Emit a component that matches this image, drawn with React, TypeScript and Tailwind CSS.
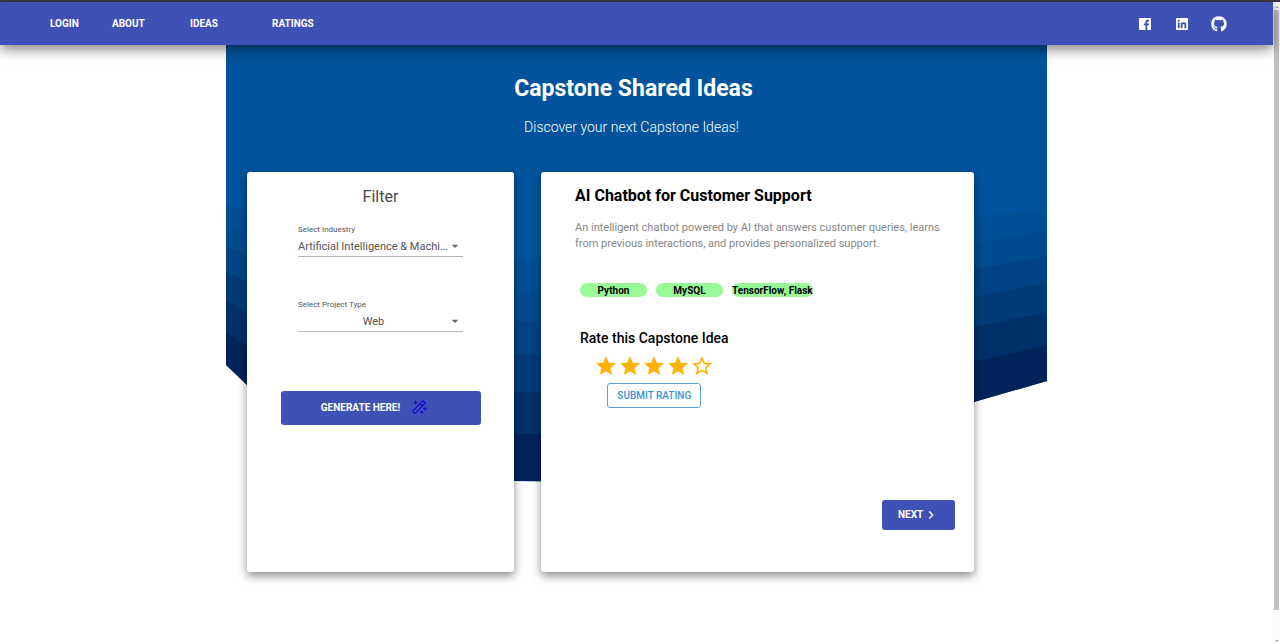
import { useState } from "react";
import { BiLogoFacebookSquare, BiLogoLinkedinSquare } from "react-icons/bi";
import { FaGithub } from "react-icons/fa";
import { MdArrowDropDown, MdChevronRight, MdStar, MdStarBorder } from "react-icons/md";
import { PiMagicWand } from "react-icons/pi";

const industries = ["Artificial Intelligence & Machine Learning", "Healthcare", "Education"];
const projectTypes = ["Web", "Mobile", "Desktop"];
const technologies = ["Python", "MySQL", "TensorFlow, Flask"];

const waves = [
  { color: "#00539c", points: "0,0 821,0 821,163 748,173 450,216 288,216 120,205 21,165 0,160" },
  { color: "#004f95", points: "0,160 21,165 120,205 288,216 450,216 748,173 821,163 821,190 748,202 450,250 288,245 120,235 21,187 0,180" },
  { color: "#004b8e", points: "0,180 21,187 120,235 288,245 400,245 748,198 821,186 821,215 748,230 400,280 288,276 120,260 21,212 0,202" },
  { color: "#004384", points: "0,202 21,210 120,262 288,276 400,276 748,224 821,211 821,245 748,260 400,312 288,309 120,290 21,240 0,227" },
  { color: "#003b78", points: "0,227 21,236 120,295 288,309 400,309 748,252 821,238 821,270 748,285 400,348 288,347 120,330 21,270 0,255" },
  { color: "#003069", points: "0,255 21,268 120,335 288,347 400,347 748,282 821,267 821,302 748,320 400,390 288,389 120,370 21,302 0,287" },
  { color: "#002459", points: "0,287 21,301 120,375 288,389 400,389 748,317 821,300 821,336 748,357 400,437 288,436 120,420 21,340 0,320" },
];

function WaveBackdrop() {
  return (
    <svg
      className="absolute inset-x-0 top-0 -z-10 h-[438px] w-full"
      viewBox="0 0 821 438"
      preserveAspectRatio="none"
      aria-hidden="true"
    >
      <polygon points="0,0 821,0 821,336 748,357 400,437 288,436 120,420 21,340 0,320" fill="#00539c" />
      {waves.map((wave) => (
        <polygon key={wave.color} points={wave.points} fill={wave.color} />
      ))}
    </svg>
  );
}

function NavBar() {
  return (
    <header className="relative z-10 flex h-[43px] items-center justify-between bg-[#3f51b5] pr-[46px] pl-[50px] text-white shadow-[0_4px_12px_rgba(0,0,0,0.5)]">
      <nav className="grid grid-cols-[62px_78px_82px_auto] text-[10px] font-bold">
        <a href="#login">LOGIN</a>
        <a href="#about">ABOUT</a>
        <a href="#ideas">IDEAS</a>
        <a href="#ratings">RATINGS</a>
      </nav>
      <div className="flex items-center gap-[21px]">
        <a href="#facebook" aria-label="Facebook">
          <BiLogoFacebookSquare size={16} />
        </a>
        <a href="#linkedin" aria-label="LinkedIn">
          <BiLogoLinkedinSquare size={16} />
        </a>
        <a href="#github" aria-label="GitHub">
          <FaGithub size={16} />
        </a>
      </div>
    </header>
  );
}

type SelectFieldProps = { id: string; label: string; options: string[] };

function SelectField({ id, label, options }: SelectFieldProps) {
  return (
    <div className="flex w-[165px] flex-col">
      <label htmlFor={id} className="text-[8px] leading-3 text-[#555]">
        {label}
      </label>
      <div className="grid items-center border-b border-[#b4b4b4]">
        <select
          id={id}
          className="col-start-1 row-start-1 h-5 w-full appearance-none truncate bg-transparent pt-[2px] pr-[14px] text-center text-[11px] text-[#555]"
        >
          {options.map((option) => (
            <option key={option}>{option}</option>
          ))}
        </select>
        <MdArrowDropDown size={16} className="pointer-events-none col-start-1 row-start-1 justify-self-end text-[#666]" />
      </div>
    </div>
  );
}

function FilterCard() {
  return (
    <section className="flex w-[267px] flex-col items-center rounded-[3px] bg-white pt-[13px] shadow-[0_4px_10px_rgba(0,0,0,0.45)]">
      <h2 className="text-base leading-6 text-[#484848]">Filter</h2>
      <div className="mt-[15px] flex flex-col gap-[42px]">
        <SelectField id="industry" label="Select Induestry" options={industries} />
        <SelectField id="project-type" label="Select Project Type" options={projectTypes} />
      </div>
      <button
        type="button"
        className="mt-[59px] flex h-[34px] w-[200px] items-center justify-center gap-[10px] rounded-[3px] bg-[#3f51b5] pr-3 pb-[2px] text-[10px] font-bold text-white"
      >
        GENERATE HERE!
        <PiMagicWand size={18} className="text-[#1a00e0]" />
      </button>
    </section>
  );
}

function Rating() {
  const [rating, setRating] = useState(4);
  return (
    <fieldset className="flex w-[147px] flex-col items-center">
      <legend className="text-[14px] leading-4 font-medium whitespace-nowrap">Rate this Capstone Idea</legend>
      <div className="mt-2 flex text-[#ffb000]">
        {[1, 2, 3, 4, 5].map((value) => (
          <label key={value} className="relative cursor-pointer">
            <input
              type="radio"
              name="rating"
              aria-label={`${value} stars`}
              checked={rating === value}
              onChange={() => setRating(value)}
              className="absolute inset-0 size-full cursor-pointer opacity-0"
            />
            {value <= rating ? <MdStar size={24} /> : <MdStarBorder size={24} />}
          </label>
        ))}
      </div>
      <button
        type="button"
        className="mt-[5px] h-[25px] w-[94px] rounded-[3px] border border-[#55a3dd] pb-[1px] text-[10px] font-medium text-[#3992d6]"
      >
        SUBMIT RATING
      </button>
    </fieldset>
  );
}

function IdeaCard() {
  return (
    <article className="flex min-h-[400px] w-[433px] flex-col rounded-[3px] bg-white pt-3 pr-[19px] pb-[42px] pl-[34px] shadow-[0_4px_10px_rgba(0,0,0,0.45)]">
      <h2 className="text-base leading-6 font-bold">AI Chatbot for Customer Support</h2>
      <p className="mt-3 text-[11px] leading-4 text-[#868686]">
        An intelligent chatbot powered by AI that answers customer queries, learns from previous interactions, and
        provides personalized support.
      </p>
      <div className="flex flex-col gap-[33px] pt-[31px] pl-[5px]">
        <ul className="flex gap-[9px] text-[10px] leading-[13px] font-bold">
          {technologies.map((technology) => (
            <li key={technology} className="min-w-[67px] rounded-full bg-[#98fb98] pt-[1px] text-center">
              {technology}
            </li>
          ))}
        </ul>
        <Rating />
      </div>
      <button
        type="button"
        className="mt-auto flex h-[30px] w-[73px] items-center self-end rounded-[3px] bg-[#3f51b5] pb-[1px] pl-4 text-[10px] font-bold text-white"
      >
        NEXT
        <MdChevronRight size={16} />
      </button>
    </article>
  );
}

function ScrollRail() {
  return (
    <div className="flex w-[7px] flex-col items-center bg-[#fcfcfc] pt-1 pb-[2px]" aria-hidden="true">
      <svg className="h-[2px] w-1" viewBox="0 0 4 2">
        <path d="M0 2 2 0 4 2z" fill="#aaa" />
      </svg>
      <div className="mt-[2px] mb-[30px] w-[5px] grow bg-[#c1c1c1]" />
      <svg className="h-[2px] w-1" viewBox="0 0 4 2">
        <path d="M0 0 2 2 4 0z" fill="#aaa" />
      </svg>
    </div>
  );
}

export default function App() {
  return (
    <div className="flex min-h-screen flex-col border-t-2 border-[#3b3b3f] bg-white font-['Roboto',sans-serif] text-black">
      <div className="flex grow">
        <div className="min-w-0 grow">
          <NavBar />
          <main className="relative isolate mx-auto w-full max-w-[821px]">
            <WaveBackdrop />
            <div className="pt-7 pr-[6px] text-center text-white">
              <h1 className="text-[23px] leading-8 font-bold">Capstone Shared Ideas</h1>
              <p className="mt-3 pr-1 text-[14px] leading-5 font-light">Discover your next Capstone Ideas!</p>
            </div>
            <div className="flex gap-[27px] pt-[35px] pl-[21px]">
              <FilterCard />
              <IdeaCard />
            </div>
          </main>
        </div>
        <ScrollRail />
      </div>
    </div>
  );
}
